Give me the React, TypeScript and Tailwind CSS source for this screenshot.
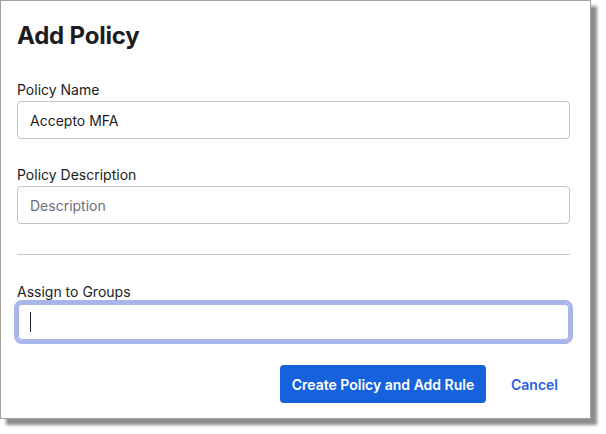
export default function App() {
  return (
    <div className="min-h-[434px] w-[606px] bg-white font-['Inter','Liberation_Sans',sans-serif] text-[#1d1d21]">
      <div className="w-[591px] h-[419px] border border-[#a3a3a3] bg-white shadow-[6px_6px_3px_rgba(0,0,0,0.45)] pl-4 pr-5 pt-[19px]">
        <h1 className="text-[24px] leading-[32px] font-bold tracking-[-0.2px]">Add Policy</h1>

        <label className="block mt-[28px] text-[14px] leading-[20px]">Policy Name</label>
        <div className="mt-px h-[38px] rounded-[4px] border border-[#c4c4c4] px-3 flex items-center text-[14px]">
          Accepto MFA
        </div>

        <label className="block mt-[26px] text-[14px] leading-[20px]">Policy Description</label>
        <div className="mt-px h-[38px] rounded-[4px] border border-[#c4c4c4] px-3 flex items-center text-[14px] text-[#6e6e78]">
          Description
        </div>

        <hr className="mt-[30px] border-t border-[#c8c8c8]" />

        <label className="block mt-[27px] text-[14px] leading-[20px]">Assign to Groups</label>
        <div className="mt-px h-[38px] rounded-[5px] border-2 border-[#a9b5ea] ring-3 ring-[#a9b5ea] px-[11px] flex items-center">
          <span className="block w-px h-[20px] bg-[#1d1d21]" />
        </div>

        <div className="mt-[24px] flex items-center justify-end gap-[13px]">
          <button className="w-[206px] h-[38px] rounded-[4px] bg-[#1662dd] text-white text-[14px] font-semibold">
            Create Policy and Add Rule
          </button>
          <button className="px-3 h-[38px] text-[14px] font-semibold text-[#2d5ee6]">Cancel</button>
        </div>
      </div>
    </div>
  );
}
